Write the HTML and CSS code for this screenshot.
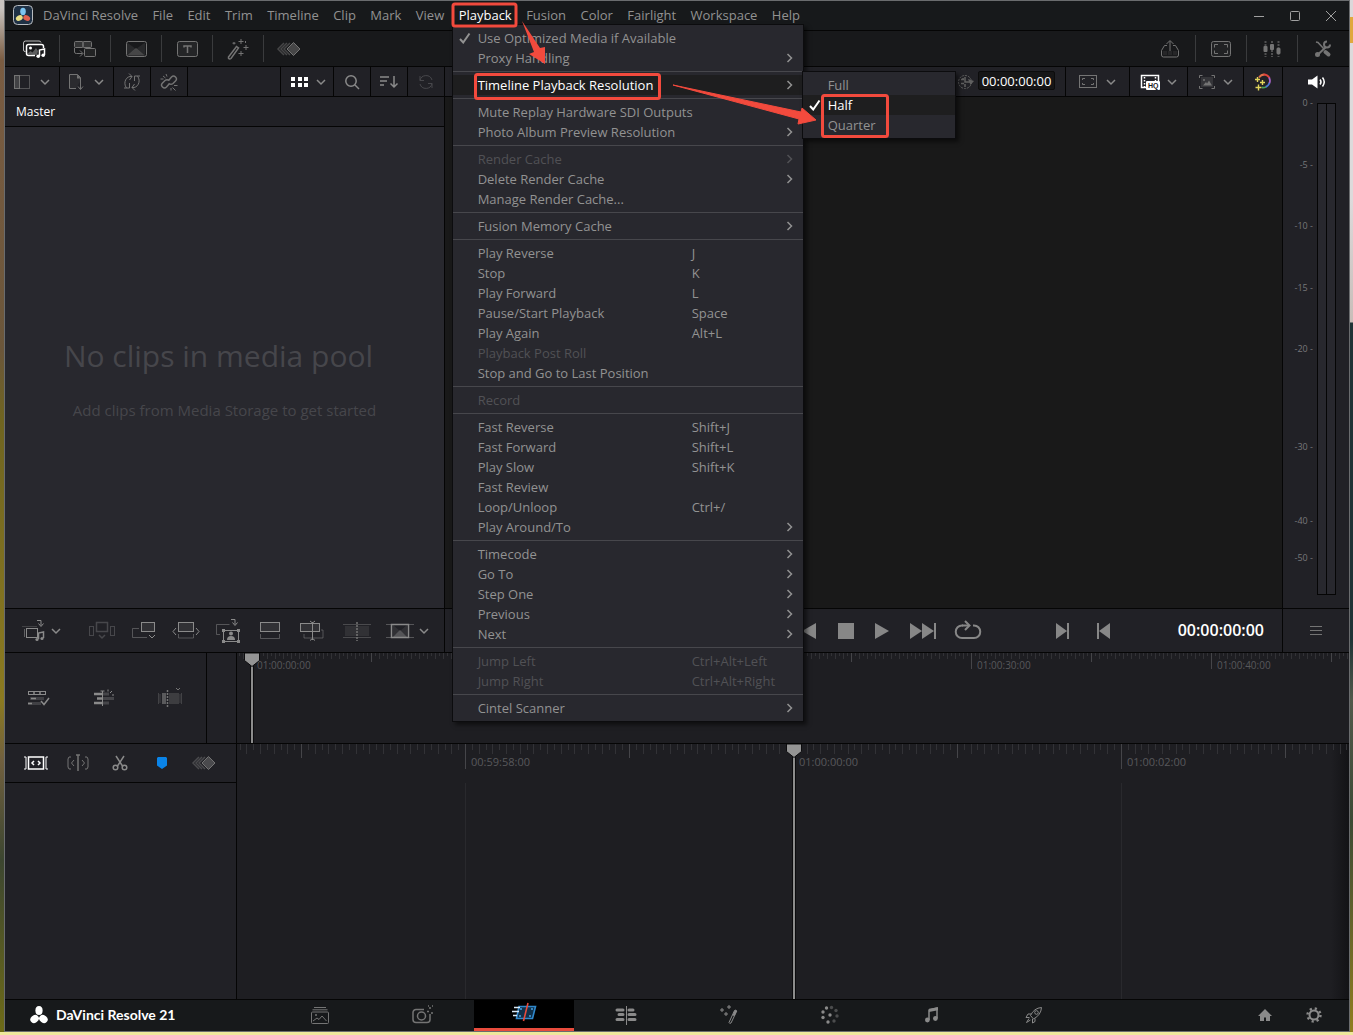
FILE: index.html
```html
<!DOCTYPE html>
<html lang="en">
<head>
<meta charset="utf-8">
<title>DaVinci Resolve</title>
<link rel="stylesheet" href="styles.css">
</head>
<body>
<svg class="sprite" aria-hidden="true">
  <symbol id="i-chev" viewBox="0 0 12 12"><path d="M2 4l4 4 4-4" class="ln2"/></symbol>
  <symbol id="i-right" viewBox="0 0 10 10"><path d="M2.500 1l4 4-4 4" class="ln2"/></symbol>
  <symbol id="i-check" viewBox="0 0 12 12"><path d="M1 7l3.200 3.500L10.500 1.500" fill="none" stroke="currentColor" stroke-width="2"/></symbol>
  <symbol id="i-keys" viewBox="0 0 26 20"><path d="M8 4L2 10l6 6M11 4L5 10l6 6M14 4L8 10l6 6" class="ln2" opacity=".5"/><path d="M11 10l6.500-6.500L24 10l-6.500 6.500z" fill="currentColor" fill-opacity=".5" stroke="currentColor"/></symbol>
  <symbol id="i-screen" viewBox="0 0 22 18"><rect x="1.500" y="1.500" width="19" height="15" rx="2" fill="currentColor" fill-opacity=".1" stroke="currentColor"/><path d="M4.500 7.500v-3h3.500M14 4.500h3.500v3M17.500 10.500v3H14M8 13.500H4.500v-3" class="ln"/></symbol>
</svg>

<div class="window">
  <header class="menubar">
    <svg class="app-logo" viewBox="0 0 20 20"><rect x=".5" y=".5" width="19" height="19" rx="4" fill="#1f3145" stroke="#b9bcc0"/><ellipse cx="10" cy="6.500" rx="2.800" ry="3.700" fill="#7cc4f0"/><ellipse cx="6.300" cy="13" rx="3.600" ry="2.700" transform="rotate(-30 6.300 13)" fill="#e8de86"/><ellipse cx="13.700" cy="13" rx="3.600" ry="2.700" transform="rotate(30 13.700 13)" fill="#e0604f"/></svg>
    <nav class="menus">
      <button>DaVinci Resolve</button><button>File</button><button>Edit</button><button>Trim</button><button>Timeline</button><button>Clip</button><button>Mark</button><button>View</button>
      <div class="menu-root">
        <button class="open">Playback</button>
        <ul class="menu">
          <li><button><svg class="tick"><use href="#i-check"/></svg><span>Use Optimized Media if Available</span></button></li>
          <li><button><span>Proxy Handling</span><svg class="sub"><use href="#i-right"/></svg></button></li>
          <li class="sep"></li>
          <li class="has-sub"><button class="hot"><span>Timeline Playback Resolution</span><svg class="sub"><use href="#i-right"/></svg></button>
            <ul class="menu submenu">
              <li><button><span>Full</span></button></li>
              <li><button class="hot"><svg class="tick"><use href="#i-check"/></svg><span>Half</span></button></li>
              <li><button><span>Quarter</span></button></li>
            </ul>
          </li>
          <li class="sep"></li>
          <li><button><span>Mute Replay Hardware SDI Outputs</span></button></li>
          <li><button><span>Photo Album Preview Resolution</span><svg class="sub"><use href="#i-right"/></svg></button></li>
          <li class="sep"></li>
          <li><button disabled><span>Render Cache</span><svg class="sub"><use href="#i-right"/></svg></button></li>
          <li><button><span>Delete Render Cache</span><svg class="sub"><use href="#i-right"/></svg></button></li>
          <li><button><span>Manage Render Cache...</span></button></li>
          <li class="sep"></li>
          <li><button><span>Fusion Memory Cache</span><svg class="sub"><use href="#i-right"/></svg></button></li>
          <li class="sep"></li>
          <li><button><span>Play Reverse</span><kbd>J</kbd></button></li>
          <li><button><span>Stop</span><kbd>K</kbd></button></li>
          <li><button><span>Play Forward</span><kbd>L</kbd></button></li>
          <li><button><span>Pause/Start Playback</span><kbd>Space</kbd></button></li>
          <li><button><span>Play Again</span><kbd>Alt+L</kbd></button></li>
          <li><button disabled><span>Playback Post Roll</span></button></li>
          <li><button><span>Stop and Go to Last Position</span></button></li>
          <li class="sep"></li>
          <li><button disabled><span>Record</span></button></li>
          <li class="sep"></li>
          <li><button><span>Fast Reverse</span><kbd>Shift+J</kbd></button></li>
          <li><button><span>Fast Forward</span><kbd>Shift+L</kbd></button></li>
          <li><button><span>Play Slow</span><kbd>Shift+K</kbd></button></li>
          <li><button><span>Fast Review</span></button></li>
          <li><button><span>Loop/Unloop</span><kbd>Ctrl+/</kbd></button></li>
          <li><button><span>Play Around/To</span><svg class="sub"><use href="#i-right"/></svg></button></li>
          <li class="sep"></li>
          <li><button><span>Timecode</span><svg class="sub"><use href="#i-right"/></svg></button></li>
          <li><button><span>Go To</span><svg class="sub"><use href="#i-right"/></svg></button></li>
          <li><button><span>Step One</span><svg class="sub"><use href="#i-right"/></svg></button></li>
          <li><button><span>Previous</span><svg class="sub"><use href="#i-right"/></svg></button></li>
          <li><button><span>Next</span><svg class="sub"><use href="#i-right"/></svg></button></li>
          <li class="sep"></li>
          <li><button disabled><span>Jump Left</span><kbd>Ctrl+Alt+Left</kbd></button></li>
          <li><button disabled><span>Jump Right</span><kbd>Ctrl+Alt+Right</kbd></button></li>
          <li class="sep"></li>
          <li><button><span>Cintel Scanner</span><svg class="sub"><use href="#i-right"/></svg></button></li>
        </ul>
      </div>
      <button>Fusion</button><button>Color</button><button>Fairlight</button><button>Workspace</button><button>Help</button>
    </nav>
    <div class="grow"></div>
    <div class="win-controls">
      <button aria-label="Minimize"><svg width="12" height="12"><path d="M1 6.500h10" class="ln"/></svg></button>
      <button aria-label="Maximize"><svg width="12" height="12"><rect x="1.500" y="1.500" width="9" height="9" rx="1" class="ln"/></svg></button>
      <button aria-label="Close"><svg width="12" height="12"><path d="M1 1l10 10M11 1L1 11" class="ln"/></svg></button>
    </div>
  </header>

  <div class="toolbar">
    <button class="on" aria-label="Media Pool"><svg width="24" height="20"><path d="M3.500 12.500H3a1.500 1.500 0 0 1-1.500-1.500V4A2 2 0 0 1 3.500 2H17a2 2 0 0 1 2 1.500" class="ln" opacity=".7"/><path d="M13 16.500H6.500a2 2 0 0 1-2-2v-7a2 2 0 0 1 2-2h13a2 2 0 0 1 2 2V9" class="ln2"/><circle cx="8.500" cy="9" r="1.500" fill="currentColor"/><path d="M5 15l3.500-3 2 1.500L14 9l2 3-1 4z" fill="currentColor" opacity=".3"/><path d="M17.500 17V11l5-1v6" class="ln2"/><circle cx="16.200" cy="17.300" r="1.800" fill="currentColor"/><circle cx="21.200" cy="16.300" r="1.800" fill="currentColor"/></svg></button>
    <button aria-label="Sync Bin"><svg width="24" height="20"><g fill="currentColor" fill-opacity=".3" stroke="currentColor"><rect x="1.500" y="2.500" width="8.500" height="6" rx="1"/><rect x="10" y="2.500" width="8.500" height="6" rx="1"/><rect x="11.500" y="9.500" width="11" height="8" rx="1" fill="#222324" fill-opacity="1"/></g><path d="M1.500 9v4q0 1.500 2 1.500h6M7 11.500l3 3-3 3" class="ln"/></svg></button>
    <button aria-label="Transitions"><svg width="22" height="18"><path d="M2 15.500L11 8l9 7.500z" fill="currentColor" opacity=".5"/><path d="M2 2.500L11 9l9-6.500v13L11 9l-9 6.500z" fill="currentColor" opacity=".18"/><rect x="1.500" y="1.500" width="20" height="15" rx="2" class="ln"/></svg></button>
    <button aria-label="Titles"><svg width="22" height="18"><rect x="1.500" y="1.500" width="20" height="15" rx="2" fill="currentColor" fill-opacity=".14" stroke="currentColor"/><path d="M8 7.500V6h7v1.500M11.500 6v7" class="ln2"/></svg></button>
    <button aria-label="Effects"><svg width="22" height="22"><path d="M1.500 19L9.500 8.500l2 1.500-7.500 10.500q-1.500 1-2.500-.3z" class="ln2"/><path d="M14 1v5M11.500 3.500h5M19 7v5M16.500 9.500h5M14 13v5M11.500 15.500h5M7 4v2.500M5.500 5.200h3M18.500 3v2" class="ln"/></svg></button>
    <button class="last" aria-label="Keyframes"><svg width="26" height="20"><use href="#i-keys"/></svg></button>
    <div class="grow"></div>
    <button aria-label="Quick Export"><svg width="20" height="20"><path d="M7 6.500H4.500l-3 5V16a2 2 0 0 0 2 2h13a2 2 0 0 0 2-2v-4.500l-3-5H13M10 12V2M6.500 5L10 1.500 13.500 5" class="ln"/><path d="M3 14h14" stroke="currentColor" stroke-width="4" stroke-dasharray="4 1" opacity=".15"/></svg></button>
    <button aria-label="Full Screen"><svg width="22" height="18"><use href="#i-screen"/></svg></button>
    <button aria-label="Mixer"><svg width="20" height="18"><path d="M3.500 1v16M10 1v16M16.500 1v16" stroke="currentColor" stroke-width="2" stroke-dasharray="2 1" opacity=".6"/><g fill="currentColor"><rect x="1.500" y="6" width="4" height="6" rx="1"/><rect x="8" y="4" width="4" height="6" rx="1"/><rect x="14.500" y="8" width="4" height="6" rx="1"/></g></svg></button>
    <button class="last" aria-label="Inspector"><svg width="18" height="18"><path d="M2 2l2 .5L10 9" class="ln2"/><path d="M11.500 12l3 2.500" stroke="currentColor" stroke-width="4" stroke-linecap="round"/><path d="M4 14.500L12 7" stroke="currentColor" stroke-width="2"/><path d="M16 4.500a3 3 0 1 1-3-3" fill="none" stroke="currentColor" stroke-width="2"/><circle cx="3.500" cy="14.500" r="2.500" fill="currentColor"/></svg></button>
  </div>

  <main class="main">
    <section class="pool">
      <div class="strip">
        <button class="two"><svg width="16" height="14"><rect x=".5" y=".5" width="15" height="13" class="ln" opacity=".6"/><rect x=".5" y=".5" width="5" height="13" fill="currentColor" fill-opacity=".4" stroke="currentColor"/></svg><svg class="chev"><use href="#i-chev"/></svg></button>
        <button class="two b"><svg width="16" height="16"><path d="M8 14.500H1.500V.5h8l3 3V7" fill="currentColor" fill-opacity=".12" stroke="currentColor"/><path d="M9 .5v4h4z" fill="currentColor"/><path d="M12.500 7v8M10 12.500l2.500 3 2.500-3" class="ln"/></svg><svg class="chev"><use href="#i-chev"/></svg></button>
        <button class="sq"><svg width="18" height="18"><path d="M3.500 15C-.5 9.500 3.500 2.500 9 3.500M6 .5l3 3-2.500 3.500M1 15h5.500v-5M14.500 3c4 5.500 0 12.500-5.500 11.500M12 17.500l-3-3 2.500-3.500M17 3h-5.500v5" class="ln"/></svg></button>
        <button class="sq"><svg width="18" height="18"><path d="M8.500 7.500l3-3.500q2-2 4 0t0 4l-2.500 2.500q-2 1.500-4 0" class="ln2"/><path d="M9.500 10.500l-3 3.500q-2 2-4 0t0-4l2.500-2.500q2-1.500 4 0" class="ln2"/><path d="M3 3l2.500 2M.5 6h3M6 1l1 2.500M12.500 14.500l3 3M14 12.500h3.500M11 15v2.500" class="ln"/></svg></button>
        <div class="grow"></div>
        <button class="grid on"><svg width="18" height="12" fill="currentColor"><path d="M0 1h4v4H0zM7 1h4v4H7zM13 1h4v4h-4zM0 7h4v4H0zM7 7h4v4H7zM13 7h4v4h-4z"/></svg><svg class="chev"><use href="#i-chev"/></svg></button>
        <button class="sq lite"><svg width="16" height="16"><circle cx="7" cy="7" r="5.200" class="ln2"/><path d="M11 11l4 4" class="ln2"/></svg></button>
        <button class="sq lite"><svg width="18" height="14"><path d="M0 2h9M0 6h7M0 10h4" class="ln2"/><path d="M14 1v11M10.500 8.500L14 12l3.500-3.500" class="ln2"/></svg></button>
        <button class="sq end" disabled><svg width="16" height="16"><path d="M2 6.500A6.200 6.200 0 0 1 14 6M14 9.500A6.200 6.200 0 0 1 2 10M2 2v4.500h4M14 14V9.500h-4" class="ln"/></svg></button>
      </div>
      <div class="bin">Master</div>
      <div class="empty">
        <h1>No clips in media pool</h1>
        <p>Add clips from Media Storage to get started</p>
      </div>
    </section>

    <section class="viewer">
      <div class="strip">
        <div class="grow"></div>
        <svg class="clock" width="18" height="18"><circle cx="8" cy="9" r="6.500" class="ln" stroke-dasharray="2 1"/><path d="M8 4v5h5M4 6.500h3M4 10.500h3M8 11v3M6 5v2" class="ln2"/><path d="M11 6l6 2-3.500 4z" fill="currentColor"/></svg>
        <input class="tc" type="text" value="00:00:00:00" aria-label="Timecode">
        <button class="v1"><svg width="18" height="13"><rect x=".5" y=".5" width="17" height="12" class="ln"/><path d="M3.500 5V3.500H6M12 3.500h2.500V5M14.500 8v1.500H12M6 9.500H3.500V8" class="ln"/></svg><svg class="chev"><use href="#i-chev"/></svg></button>
        <button class="v2 on"><svg width="20" height="16"><path d="M6 13.500H1.500v-12h17V7" class="ln2"/><path d="M4.500 3v10M15.500 3v4" stroke="currentColor" stroke-width="1.500" stroke-dasharray="1.500 1.500"/><rect x="6" y="7" width="14" height="9" rx="1" fill="currentColor"/><text x="8" y="14" class="hq">HQ</text></svg><svg class="chev"><use href="#i-chev"/></svg></button>
        <button class="v3"><svg width="18" height="16"><path d="M1.500 4V1.500h3M13.500 1.500h3V4M16.500 12v2.500h-3M4.500 14.500h-3V12" class="ln"/><rect x="3" y="3" width="12" height="10" fill="currentColor" opacity=".25"/><path d="M5 11.500l3-3.500 1 1.500 2-3 3 5z" fill="currentColor"/><circle cx="6" cy="6" r="1" fill="currentColor"/></svg><svg class="chev"><use href="#i-chev"/></svg></button>
        <button class="v4"><svg width="20" height="18" fill="none" stroke-width="1.800"><path d="M6 4.500Q8 1.500 11.500 1.500" stroke="#e0704a"/><path d="M10.500 1.500q4 0 6 3.500" stroke="#e0443c"/><path d="M16.200 4.500q1.500 3.500 0 6" stroke="#a764c8"/><path d="M16.500 10q-1.500 3.500-4 4" stroke="#4a78d8"/><path d="M13 14q-2 .8-4 .5" stroke="#46a05a"/><path d="M4.500 4v5M2 6.500h5M9.500 7v5M7 9.500h5M5.500 11.500v6M2.500 14.500h6" stroke="#e2d55c" stroke-width="1.400"/></svg></button>
      </div>
      <div class="picture"></div>
    </section>

    <section class="meter">
      <button class="speaker" aria-label="Mute"><svg width="18" height="14"><path d="M0 4.500h4L9.500.5v13L4 9.500H0z" fill="currentColor"/><path d="M12 4.500q2 2.500 0 5M14.500 2.500q3.500 4.500 0 9" class="ln2"/></svg></button>
      <div class="meter-body">
        <ol class="scale">
          <li class="s62">0 -</li><li class="s61">-5 -</li><li class="s62">-10 -</li><li class="s61">-15 -</li><li class="s98">-20 -</li><li class="s74">-30 -</li><li class="s37">-40 -</li><li class="s37">-50 -</li>
        </ol>
        <div class="bars"><i></i><i></i></div>
      </div>
    </section>
  </main>

  <div class="transport">
    <div class="edit-tools">
      <button class="insert lite"><svg width="24" height="24"><path d="M0 7.500h15" class="ln" opacity=".3"/><rect x="4.500" y="9.500" width="11" height="9" class="ln"/><path d="M2.500 10v8" class="ln" opacity=".6"/><path d="M15 1.500h4v5M16.500 4.500l2.500 3 2.500-3" class="ln"/><path d="M16.500 20v-6l5-1v6" class="ln2"/><circle cx="15" cy="20.500" r="1.600" fill="currentColor"/><circle cx="20" cy="19.500" r="1.600" fill="currentColor"/></svg><svg class="chev"><use href="#i-chev"/></svg></button>
      <button disabled><svg width="26" height="20"><rect x="7.500" y="1.500" width="11" height="9" class="ln2"/><rect x=".5" y="5.500" width="4" height="9" class="ln"/><rect x="21.500" y="5.500" width="4" height="9" class="ln"/><path d="M10 14l3 3 3-3" class="ln2"/></svg></button>
      <button class="lite"><svg width="26" height="20"><rect x="10.500" y="1.500" width="13" height="9" fill="currentColor" fill-opacity=".15" stroke="currentColor"/><path d="M8 7.500H1.500v9H16" class="ln" opacity=".5"/><path d="M18 14l3 3 3-3" class="ln"/></svg></button>
      <button class="lite"><svg width="28" height="20"><rect x="6.500" y="1.500" width="15" height="9" fill="currentColor" fill-opacity=".15" stroke="currentColor"/><path d="M6.500 13v4h15v-4" class="ln" opacity=".5"/><path d="M4 7l-3 3.500L4 14M24 7l3 3.500-3 3.500" class="ln"/></svg></button>
      <button class="lite"><svg width="26" height="26"><path d="M5 16.500H1.500v-10h13" class="ln" opacity=".5"/><path d="M16 1.500h4v5M17.500 4.500l2.500 3 2.500-3" class="ln"/><rect x="8.500" y="12.500" width="15" height="11" class="ln"/><circle cx="16" cy="15.500" r="2" fill="currentColor"/><path d="M12 22q0-4 4-4t4 4z" fill="currentColor"/><path d="M7 11h3v3H7zM22 11h3v3h-3zM7 22h3v3H7zM22 22h3v3h-3z" fill="currentColor"/></svg></button>
      <button class="lite"><svg width="22" height="20"><rect x="1.500" y="1.500" width="19" height="9" fill="currentColor" fill-opacity=".15" stroke="currentColor"/><path d="M1.500 13v4.500h19V13" class="ln" opacity=".5"/></svg></button>
      <button class="lite"><svg width="26" height="20"><rect x="1.500" y="2.500" width="19" height="8" fill="currentColor" fill-opacity=".15" stroke="currentColor"/><path d="M5 13v4h19V9h-2" class="ln" opacity=".5"/><path d="M13.500 1v18M11 0l2.500 2L16 0M11 19.500l2.500-2 2.500 2" class="ln"/></svg></button>
      <button class="wide"><svg width="28" height="20"><path d="M0 3.500h28M0 16.500h28" class="ln" opacity=".5"/><path d="M2 5h24v10H2z" fill="currentColor" opacity=".2"/><path d="M14 1v19" class="ln2" stroke-dasharray="2 1"/></svg></button>
      <button class="trans lite"><svg width="28" height="18"><path d="M0 2.500h28M0 15.500h28" class="ln" opacity=".5"/><rect x="5.500" y="2.500" width="17" height="13" class="ln2"/><path d="M7 15l7-7 7 7z" fill="currentColor" opacity=".5"/><path d="M7 3l7 6 7-6v12l-7-6-7 6z" fill="currentColor" opacity=".15"/></svg><svg class="chev"><use href="#i-chev"/></svg></button>
    </div>
    <div class="playback">
      <button class="p36" aria-label="Play reverse"><svg width="16" height="16"><path d="M14 0v16L0 8z" fill="currentColor"/></svg></button>
      <button class="p36" aria-label="Stop"><svg width="16" height="16"><path d="M0 0h16v16H0z" fill="currentColor"/></svg></button>
      <button class="p36" aria-label="Play"><svg width="16" height="16"><path d="M1 0v16l14-8z" fill="currentColor"/></svg></button>
      <button class="p46" aria-label="Last clip"><svg width="26" height="16"><path d="M0 0v16l12-8zM12 0v16l12-8zM24 0h2v16h-2z" fill="currentColor"/></svg></button>
      <button class="p44" aria-label="Loop"><svg width="26" height="20"><path d="M8 4.500H7a6 6 0 0 0 0 12.500h12a6 6 0 0 0 0-12.500h-1" fill="none" stroke="currentColor" stroke-width="2"/><path d="M10 0l4.500 4.500-4.500 4.500" fill="none" stroke="currentColor" stroke-width="2"/><path d="M7 4.500h7" stroke="currentColor" stroke-width="2"/></svg></button>
      <div class="grow"></div>
      <button class="p40" aria-label="Next edit"><svg width="14" height="16"><path d="M0 0v16l11-8zM11 0h2v16h-2z" fill="currentColor"/></svg></button>
      <button class="p40" aria-label="Previous edit"><svg width="14" height="16"><path d="M14 0v16L3 8zM1 0h2v16H1z" fill="currentColor"/></svg></button>
      <output class="big-tc">00:00:00:00</output>
    </div>
    <button class="options" aria-label="Options"><svg width="14" height="12"><path d="M1 1.500h12M1 5.500h12M1 9.500h12" class="ln"/></svg></button>
  </div>

  <section class="overview">
    <div class="ov-tools">
      <button class="lite"><svg width="22" height="18"><rect x="1.500" y="2.500" width="17" height="3" class="ln"/><path d="M7 2v4M13 2v4M4 9.500h5M1 14.500h4" class="ln2"/><path d="M3 9.500h14M1 14.500h13" stroke="currentColor" stroke-width="3" opacity=".3"/><path d="M14 12l3 3.500L22 9" class="ln2"/></svg></button>
      <button class="lite"><svg width="22" height="18"><path d="M1 5h8M4 9.500h5M1 14h8" stroke="currentColor" stroke-width="2.400"/><path d="M10 5h6M10 9.500h11M10 14h6" stroke="currentColor" stroke-width="3" opacity=".35"/><path d="M9.500 2v15M7.500 2h4M15 .5v2M19 2l-2 2M19 6h2" class="ln"/></svg></button>
      <button><svg width="26" height="22"><path d="M1.500 6v11M3 7v9M24.500 6v11M23 7v9" stroke="currentColor" opacity=".4"/><path d="M5 6h4v11H5z" fill="currentColor" opacity=".7"/><path d="M12 6h10v11H12z" fill="currentColor" opacity=".35"/><path d="M10.500 3v17" class="ln2" stroke-dasharray="2 1"/><path d="M19 1l2 2 2-2" class="ln"/></svg></button>
    </div>
    <div class="ov-side"></div>
    <div class="ov-track">
      <svg class="ruler" data-origin="14" data-step="4" data-heights="3,6,9,16" data-every="1,2,30,60"></svg>
      <span class="mark" style="left:18px">01:00:00:00</span>
      <span class="mark" style="left:738px">01:00:30:00</span>
      <span class="mark" style="left:978px">01:00:40:00</span>
      <div class="playhead" style="left:7px"><svg width="16" height="14"><path d="M.5 0h15v7.500L8 13.500.5 7.500z"/></svg></div>
    </div>
  </section>

  <section class="timeline">
    <div class="tl-left">
      <div class="tl-tools">
        <button class="on"><svg width="24" height="14"><rect x="4.500" y="1" width="15" height="12" class="ln2"/><path d="M0 1h2v12H0M24 1h-2v12h2" class="ln"/><path d="M10 5L8 7l2 2M14 5l2 2-2 2" class="ln2"/></svg></button>
        <button><svg width="22" height="18"><path d="M4 3H2L1 5v8l1 2h2M18 3h2l1 2v8l-1 2h-2M7 6L4.500 9 7 12M15 6l2.500 3-2.500 3" class="ln"/><path d="M11 1v16" class="ln2"/><path d="M9 1h4" class="ln2"/></svg></button>
        <button class="lite"><svg width="16" height="16"><path d="M4 1l6.500 10M12 1L5.500 11" class="ln2"/><circle cx="3.500" cy="12.500" r="2.300" class="ln2"/><circle cx="12.500" cy="12.500" r="2.300" class="ln2"/></svg></button>
        <button class="flag"><svg width="12" height="14"><path d="M1 2l1-1h8l1 1v7.500L6 13 1 9.500z" fill="#0a84e8"/></svg></button>
        <button class="keys"><svg width="26" height="20"><use href="#i-keys"/></svg></button>
      </div>
    </div>
    <div class="tl-track">
      <svg class="ruler tall" data-origin="556" data-step="6.8333" data-heights="6,10,14,25" data-every="1,2,24,48"></svg>
      <span class="mark low" style="left:234px">00:59:58:00</span>
      <span class="mark low" style="left:562px">01:00:00:00</span>
      <span class="mark low" style="left:890px">01:00:02:00</span>
      <i class="guide" style="left:228px"></i><i class="guide" style="left:884px"></i>
      <div class="playhead" style="left:549px"><svg width="16" height="14"><path d="M.5 0h15v7.500L8 13.500.5 7.500z"/></svg></div>
    </div>
  </section>

  <footer class="pages">
    <div class="brand"><svg width="18" height="18" fill="#fff"><ellipse cx="9" cy="4.600" rx="3.600" ry="4.500"/><ellipse cx="4.600" cy="13" rx="4.500" ry="3.700" transform="rotate(-35 4.600 13)"/><ellipse cx="13.400" cy="13" rx="4.500" ry="3.700" transform="rotate(35 13.400 13)"/></svg><span>DaVinci Resolve 21</span></div>
    <nav class="tabs">
      <button aria-label="Media"><svg width="18" height="18"><path d="M3 1.500h12M1.500 3.800h15" class="ln"/><rect x=".5" y="6" width="17" height="11.500" rx="1" class="ln"/><path d="M2 15l4-3 2 1.500L11 10l4.500 5" class="ln"/><circle cx="5" cy="9" r="1" fill="currentColor"/></svg></button>
      <button aria-label="Photo"><svg width="22" height="20"><path d="M13 4.500H5a3 3 0 0 0-3 3v7a3 3 0 0 0 3 3h11a3 3 0 0 0 3-3V9" class="ln2"/><circle cx="10.500" cy="11" r="4" class="ln2"/><path d="M16 6.500h2M18 3h2M20 8h2M17 1h1M21 1h1" class="ln2"/></svg></button>
      <button class="active" aria-label="Cut"><svg width="26" height="20"><path d="M8 3.500h16.500l-3 12H5.500z" fill="#10304a" stroke="#2f88cc" stroke-width="1.600"/><path d="M9 6h2M8 13h2M20 6h2M18 13h2" stroke="#4aa0e0" stroke-width="1.500"/><path d="M3 4.500h6M1 8.500h7M2 12.500h4" stroke="#d8e8f4" stroke-width="1.300"/><path d="M17 0l-4.500 18" stroke="#e84b3c" stroke-width="1.600"/></svg></button>
      <button class="lite" aria-label="Edit"><svg width="22" height="20"><path d="M2 5h6M4 9.500h4M2 14.500h6M14 5h4M14 9.500h6M14 14.500h6" stroke="currentColor" stroke-width="3" stroke-linecap="round"/><path d="M11.500 1v19" class="ln"/></svg></button>
      <button class="lite" aria-label="Fusion"><svg width="22" height="20"><path d="M12 17.500l5.500-12q1.500-1 2.300.5L14 18q-1.500 1-2-.5z" class="ln"/><path d="M15.500 10.500l2-5q1.500-1 2.300.5l-2.300 5z" fill="currentColor"/><path d="M5 3v4M3 5h4M12 0v4M10 2h4M9 7v4M7 9h4" class="ln"/></svg></button>
      <button class="lite" aria-label="Color"><svg width="20" height="20" fill="currentColor"><circle cx="10" cy="10" r="1.700"/><circle cx="6.500" cy="3" r="1.700"/><circle cx="3" cy="7" r="1.700"/><circle cx="3" cy="12.500" r="1.700"/><circle cx="8" cy="17" r="1.700"/><g opacity=".45"><circle cx="11.500" cy="2.500" r="1.700"/><circle cx="16" cy="5.500" r="1.700"/><circle cx="17" cy="11" r="1.700"/><circle cx="14" cy="16" r="1.700"/></g></svg></button>
      <button class="lite" aria-label="Fairlight"><svg width="16" height="16"><path d="M5 13V3l8-2v10" class="ln2"/><path d="M5 1.800L14 .2v3L5 5z" fill="currentColor"/><circle cx="3.400" cy="13" r="2.400" fill="currentColor"/><circle cx="11.400" cy="11.500" r="2.400" fill="currentColor"/></svg></button>
      <button class="lite" aria-label="Deliver"><svg width="18" height="18"><path d="M5.500 9.500Q9 2 16.500 1.500 16 9 8.500 13zM6 8H3L1 11.500h3.500M10 12.500v3L7.500 17v-4M4 12.500L1.500 16.500 5.500 14" class="ln"/><circle cx="11.500" cy="6.500" r="1.800" class="ln"/></svg></button>
    </nav>
    <div class="foot-right">
      <button class="lite" aria-label="Home"><svg width="16" height="14"><path d="M8 1L1 8h2v5h4V9.500h2V13h4V8h2z" fill="currentColor"/></svg></button>
      <button class="lite" aria-label="Settings"><svg width="18" height="18"><circle cx="9" cy="9" r="4.500" fill="none" stroke="currentColor" stroke-width="2"/><circle cx="9" cy="9" r="6.500" fill="none" stroke="currentColor" stroke-width="2.400" stroke-dasharray="2.200 2.900"/></svg></button>
    </div>
  </footer>
</div>

<svg class="callouts" width="900" height="150">
  <g fill="none" stroke="#f24a3d" stroke-width="3"><rect x="453" y="4" width="63" height="22" rx="2"/><rect x="475.500" y="74.500" width="184" height="24" rx="2"/><rect x="822.500" y="95.500" width="65" height="41" rx="2"/></g>
  <path d="M522 21l18 27 5-1v17L529 54l5-2z" fill="#f24a3d"/>
  <path d="M673 85l128 27 1-4 14 12-18 4 1-5z" fill="#f24a3d" stroke="#f24a3d" stroke-width="1"/>
</svg>
<script src="ruler.js"></script>
</body>
</html>
```
FILE: ruler.js
```js
// Draw the frame ticks of each ruler; longer ticks fall on coarser divisions.
document.querySelectorAll('.ruler').forEach(function (svg) {
  var origin = +svg.dataset.origin;
  var step = +svg.dataset.step;
  var heights = svg.dataset.heights.split(',').map(Number);
  var every = svg.dataset.every.split(',').map(Number);
  var width = svg.getBoundingClientRect().width;
  for (var n = -Math.floor(origin / step); origin + n * step < width; n++) {
    var level = 0;
    every.forEach(function (e, i) { if (n % e === 0) level = i; });
    var tick = document.createElementNS('http://www.w3.org/2000/svg', 'rect');
    tick.setAttribute('x', Math.round(origin + n * step));
    tick.setAttribute('y', 0);
    tick.setAttribute('width', 1);
    tick.setAttribute('height', heights[level]);
    tick.setAttribute('class', level > 1 ? 't-major' : 't-minor');
    svg.appendChild(tick);
  }
});
```
FILE: styles.css
```css
* { box-sizing: border-box; }

body {
  margin: 0;
  font-family: "Open Sans", "Noto Sans", sans-serif;
  font-size: 13px;
  color: #929292;
  background:
    linear-gradient(#c9c4c0 0 8px, #7a5c42 60px, #6b563a 350px, #6f6420 420px, #8b7a20 700px, #71603f 760px, #3c4630 860px, #6d6a18 1030px) left / 4px 100% no-repeat,
    linear-gradient(#dcd8da 0 17px, #e0a83c 17px 43px, #dddadb 43px 200px, #c8bdb8 322px, #1f3436 323px 640px, #51594a 700px, #3c4a34 820px, #8f7e20 1030px) right / 4px 100% no-repeat,
    #efe89c;
}

button, input, output, kbd { font: inherit; color: inherit; }
button { padding: 0; border: 0; background: none; display: flex; align-items: center; justify-content: center; color: #747474; }
button.on { color: #fff; }
button.lite { color: #8a8a8a; }
button:disabled { color: #47474b; }
ul, ol { list-style: none; margin: 0; padding: 0; }
svg { display: block; flex: none; overflow: visible; }
.sprite { position: absolute; width: 0; height: 0; }
.ln { fill: none; stroke: currentColor; stroke-width: 1; }
.ln2 { fill: none; stroke: currentColor; stroke-width: 1.5; }
.grow { flex: 1; }
.chev { width: 12px; height: 12px; color: #8a8a8a; }

.window {
  display: grid;
  grid-template-columns: 1fr;
  grid-template-rows: 30px 36px minmax(300px, 542fr) 44px 91px minmax(120px, 255fr) 32px;
  min-height: calc(100vh - 3px);
  margin: 0 3px 0 4px;
  border: 1px solid #6a6c6e;
  background: #212126;
}

/* Menu bar */
.menubar { display: flex; background: #17191b; border-bottom: 1px solid #050505; }
.app-logo { width: 20px; height: 20px; margin: 4px 3px 0 8px; }
.menus { display: flex; justify-content: space-between; flex: 0 1 771px; }
.menus > button, .menu-root > button { height: 29px; padding: 0 7px 2px; color: #929292; white-space: nowrap; }
.menu-root { position: relative; }
.menu-root > .open { color: #fff; }
.win-controls { display: flex; }
.win-controls button { width: 36px; color: #a0a0a0; }

.menu {
  position: absolute;
  z-index: 5;
  top: 23px;
  left: 0;
  width: 352px;
  padding: 3px 0;
  border: 1px solid #0c0c0e;
  background: #28282e;
  box-shadow: 3px 3px 4px rgba(0, 0, 0, .5);
}
.menu li { position: relative; }
.menu button { width: 100%; height: 20px; padding-left: 25px; justify-content: flex-start; text-align: left; color: #929292; white-space: nowrap; position: relative; }
.menu button.hot { background: #1e1e1f; color: #fff; }
.menu button:disabled { color: #515155; }
.menu span { width: 214px; }
.menu .sep { height: 1px; margin: 3px 0; background: #47474c; }
.tick { position: absolute; left: 6px; top: 4px; width: 12px; height: 12px; }
.sub { position: absolute; right: 8px; top: 5px; width: 10px; height: 10px; color: #929292; }
button:disabled .sub { color: #515155; }
.menu .submenu { top: -4px; left: 349px; width: 154px; }
.submenu span { width: auto; }

/* Toolbar */
.toolbar { display: flex; padding: 4px 0 4px 4px; background: #18191b; border-bottom: 1px solid #050505; }
.toolbar button { width: 51px; border-right: 1px solid #3a3b3d; }
.toolbar .last { border-color: transparent; }

/* Upper panels */
.main { display: grid; grid-template-columns: 440px 1fr 66px; border-bottom: 1px solid #050505; }
.pool, .viewer, .meter { display: flex; flex-direction: column; min-width: 0; }
.pool, .viewer { border-right: 1px solid #050505; }
.strip { display: flex; height: 30px; border-bottom: 1px solid #050505; background: #212126; }
.strip button { border-right: 1px solid #050505; }
.strip .two { width: 55px; gap: 9px; }
.strip .b { width: 54px; }
.strip .sq { width: 37px; }
.strip .end { border: 0; width: 36px; }
.strip .grid { width: 54px; gap: 6px; padding-left: 4px; border-left: 1px solid #050505; }
.bin { height: 30px; padding-left: 11px; line-height: 29px; font-size: 12px; color: #fff; border-bottom: 1px solid #050505; }
.empty { flex: 1; display: flex; flex-direction: column; align-items: center; justify-content: center; gap: 22px; padding-top: 22px; background: #28282e; color: #46464b; }
.empty h1 { margin: 0; padding-right: 12px; font-size: 30px; line-height: 40px; font-weight: 400; white-space: nowrap; }
.empty p { margin: 0; font-size: 15px; line-height: 24px; white-space: nowrap; }

.clock { align-self: center; margin-right: 3px; color: #606060; }
.tc { width: 77px; height: 19px; margin: 4px 10px 0 0; padding: 0; border: 1px solid #0c0c0c; border-radius: 2px; background: #161617; color: #fff; text-align: center; font-size: 13px; }
.strip .v1 { width: 65px; gap: 8px; border-left: 1px solid #050505; }
.strip .v2 { width: 58px; gap: 6px; }
.strip .v3 { width: 56px; gap: 6px; }
.strip .v4 { width: 38px; border: 0; }
.hq { font-family: "Liberation Sans", sans-serif; font-size: 7px; font-weight: 700; fill: #18191b; }
.picture { flex: 1; background: #191919; }

.speaker { height: 30px; padding-left: 2px; color: #fff; }
.meter-body { flex: 1; display: flex; padding: 6px 13px 13px 0; }
.scale { flex: 1; display: flex; flex-direction: column; padding-right: 4px; font-size: 9px; line-height: 12px; text-align: right; color: #77777a; }
.scale li { min-height: 0; margin-top: -6px; padding-bottom: 6px; }
.s62 { flex: 62 1 0; } .s61 { flex: 61 1 0; } .s98 { flex: 98 1 0; } .s74 { flex: 74 1 0; } .s37 { flex: 37 1 0; }
.bars { display: flex; border: 1px solid #050505; background: #28282e; }
.bars i { width: 8px; }
.bars i + i { width: 9px; border-left: 1px solid #050505; }

/* Transport */
.transport { display: grid; grid-template-columns: 440px 1fr 66px; border-bottom: 1px solid #050505; }
.edit-tools { display: flex; border-right: 1px solid #050505; }
.edit-tools button { width: 42px; }
.edit-tools .insert { width: 76px; padding-right: 3px; gap: 4px; }
.edit-tools .wide { width: 48px; }
.edit-tools .trans { width: 54px; gap: 4px; }
.playback { display: flex; align-items: center; padding-left: 347px; border-right: 1px solid #050505; }
.playback button { height: 40px; color: #878787; }
.p36 { width: 36px; } .p46 { width: 46px; } .p44 { width: 44px; } .p40 { width: 40px; }
.big-tc { margin: 0 18px 0 55px; padding-bottom: 1px; font-size: 16px; font-weight: 600; color: #fff; }
.options { height: 43px; }

/* Timelines */
.overview, .timeline { display: grid; background: #1e1e22; }
.overview { grid-template-columns: 202px 30px 1fr; border-bottom: 1px solid #050505; }
.ov-tools { display: flex; background: #212126; border-right: 1px solid #050505; }
.ov-tools button { width: 66px; }
.ov-side { background: #212126; border-right: 1px solid #050505; }
.timeline { grid-template-columns: 232px 1fr; }
.tl-left { background: #212126; border-right: 1px solid #050505; }
.tl-tools { display: flex; height: 39px; padding-left: 10px; border-bottom: 1px solid #050505; }
.tl-tools button { width: 42px; }
.ov-track, .tl-track { position: relative; overflow: hidden; }
.tl-track { background: linear-gradient(90deg, transparent calc(100% - 18px), #131316); }
.ruler { width: 100%; height: 22px; }
.ruler.tall { height: 39px; }
.t-minor { fill: #323236; }
.t-major { fill: #454549; }
.mark { position: absolute; top: 4px; padding-left: 2px; font-size: 10px; line-height: 16px; color: #58585b; }
.mark.low { top: 10px; font-size: 11px; padding-left: 0; }
.guide { position: absolute; top: 39px; bottom: 0; width: 1px; background: #29292d; }
.playhead { position: absolute; top: 0; bottom: 0; width: 16px; background: linear-gradient(90deg, transparent 6px, #0c0c0e 6px 7px, #8c8c8c 7px 9px, #0c0c0e 9px 10px, transparent 10px); }
.playhead path { fill: #949494; stroke: #0c0c0e; }

/* Page switcher */
.pages { display: grid; grid-template-columns: 1fr auto 1fr; border-top: 1px solid #050505; background: #17191b; }
.brand { display: flex; align-items: center; gap: 8px; padding: 0 0 2px 25px; font-family: Lato, "Open Sans", sans-serif; font-size: 14px; font-weight: 700; color: #fff; }
.tabs { display: flex; gap: 2px; }
.tabs button { width: 100px; padding-bottom: 2px; }
.tabs .active { border-bottom: 3px solid #e84b3c; background: #000; }
.foot-right { display: flex; justify-content: flex-end; padding: 0 11px 2px 0; }
.foot-right button { width: 49px; }

.callouts { position: absolute; z-index: 10; left: 0; top: 0; pointer-events: none; }
```
